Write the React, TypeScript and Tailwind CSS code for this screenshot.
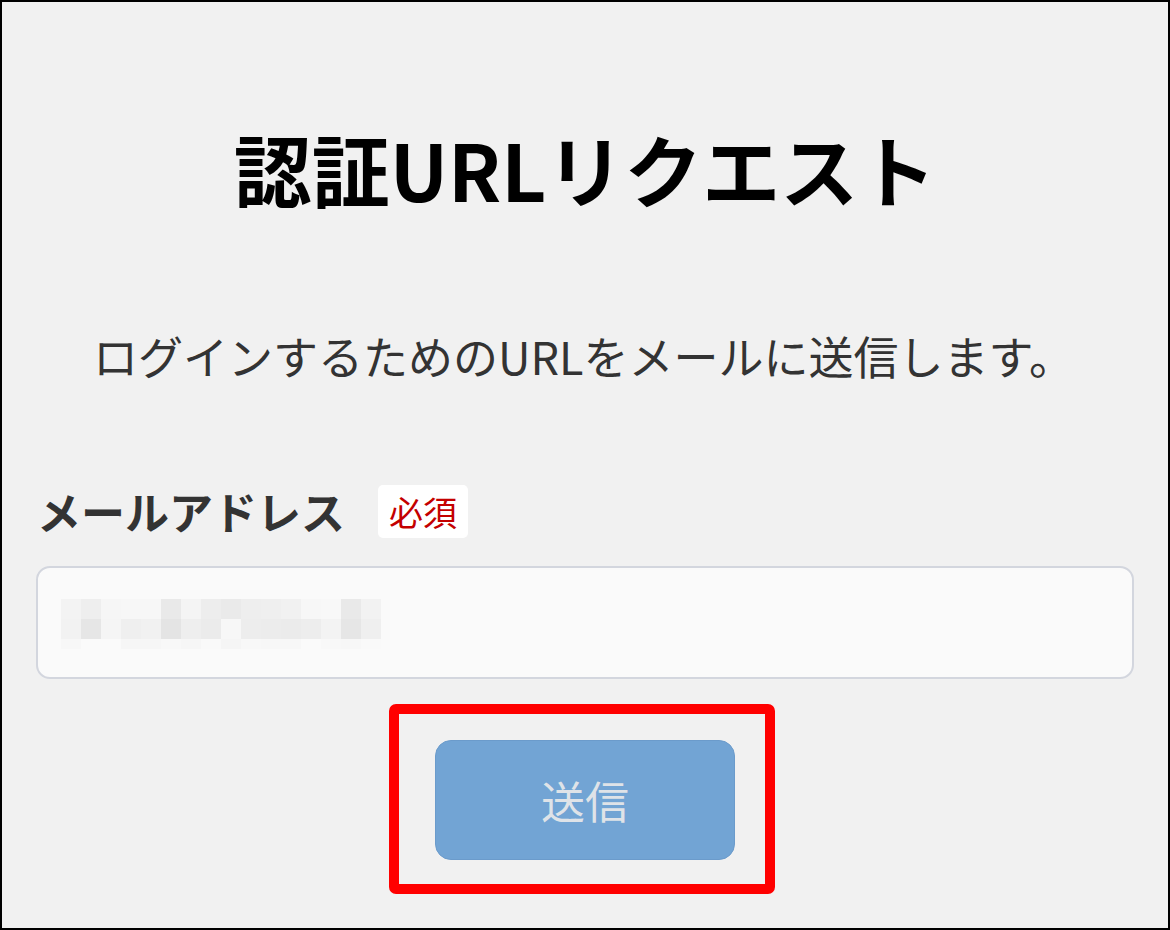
import React from 'react';

// greys for the masked email value, row by row (20px cells)
const maskRows: { h: string; cells: string[] }[] = [
  {
    h: 'h-[20px]',
    cells: ['#f3f3f3', '#eeeeee', '#f6f6f6', '#f7f7f7', '#f7f7f7', '#e9e9e9', '#f4f4f4', '#ededed', '#eaeaea', '#eeeeee', '#efefef', '#f1f1f1', '#f7f7f7', '#f8f8f8', '#e9e9e9', '#f2f2f2'],
  },
  {
    h: 'h-[20px]',
    cells: ['#f2f2f2', '#e6e6e6', '#f5f5f5', '#efefef', '#f1f1f1', '#e4e4e4', '#eeeeee', '#ebebeb', '#f7f7f7', '#ededed', '#ececec', '#ebebeb', '#ededed', '#f3f3f3', '#e6e6e6', '#efefef'],
  },
  {
    h: 'h-[10px]',
    cells: ['#f7f7f7', '#fafafa', '#fafafa', '#f6f6f6', '#f6f6f6', '#f8f8f8', '#f6f6f6', '#f9f9f9', '#f5f5f5', '#f8f8f8', '#f7f7f7', '#f7f7f7', '#fafafa', '#f8f8f8', '#f7f7f7', '#f9f9f9'],
  },
];

function MaskedValue() {
  return (
    <div className="flex flex-col">
      {maskRows.map((row, i) => (
        <div key={i} className={`flex ${row.h}`}>
          {row.cells.map((c, j) => (
            <div key={j} className="w-[20px] h-full" style={{ backgroundColor: c }} />
          ))}
        </div>
      ))}
    </div>
  );
}

export default function App() {
  return (
    <div
      className="w-[1170px] h-[930px] border-2 border-black bg-[#f1f1f1] overflow-hidden"
      style={{ fontFamily: '"Noto Sans CJK JP", "Noto Sans", sans-serif' }}
    >
      <div className="flex flex-col px-[34px] pt-[127px]">
        <h1 className="text-center text-[78px] leading-[78px] font-bold text-black">
          認証URLリクエスト
        </h1>

        <p className="mt-[126px] pl-[57px] text-[45px] leading-[45px] text-[#333333]">
          ログインするためのURLをメールに送信します。
        </p>

        <div className="mt-[107px] flex items-center gap-[33px]">
          <label className="text-[44px] leading-[53px] font-bold text-[#333333] pl-[1px]">メールアドレス</label>
          <span className="bg-white rounded-[5px] h-[53px] px-[11px] flex items-center text-[34px] leading-none text-[#c40000]">
            必須
          </span>
        </div>

        <div className="mt-[28px] h-[113px] rounded-[14px] border-2 border-[#d3d6de] bg-[#fafafa] flex items-center pl-[23px] pt-[3px]">
          <MaskedValue />
        </div>

        <div className="mt-[25px] flex justify-center">
          <div className="border-[10px] border-[#ff0000] rounded-[7px] pl-[36px] pr-[30px] pt-[26px] pb-[24px] -ml-[6px]">
            <button
              type="button"
              disabled
              className="w-[300px] h-[120px] rounded-[16px] bg-[#72a4d4] border border-[#6b9bcb] text-[44px] text-[#dfe3e8]"
            >
              送信
            </button>
          </div>
        </div>
      </div>
    </div>
  );
}
